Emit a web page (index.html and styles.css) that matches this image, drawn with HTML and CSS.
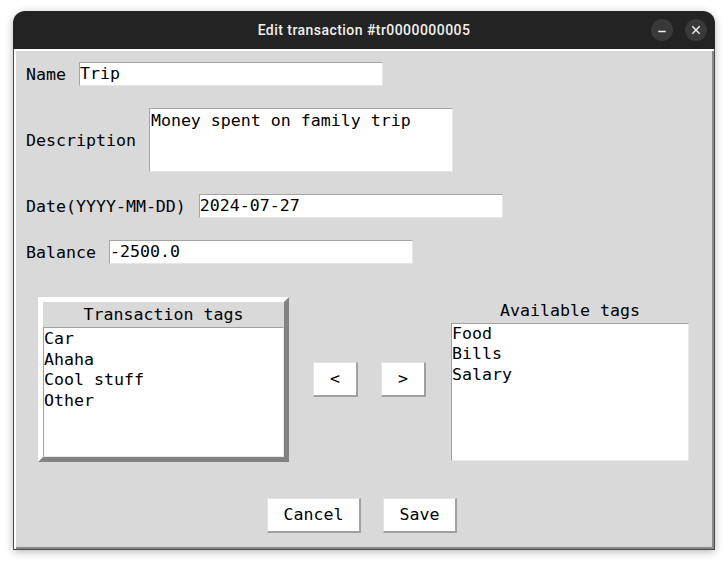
FILE: index.html
```html
<!DOCTYPE html>
<html lang="en">
<head>
<meta charset="utf-8">
<title>Edit transaction</title>
<link rel="stylesheet" href="styles.css">
</head>
<body>
<div class="window">
  <div class="titlebar">
    <span class="title">Edit transaction #tr0000000005</span>
    <div class="wctls">
      <span class="wctl"><svg width="22" height="22" viewBox="0 0 22 22"><path d="M7.3 12.5h7.4" stroke="#f2f2f2" stroke-width="1.5" fill="none"/></svg></span>
      <span class="wctl"><svg width="22" height="22" viewBox="0 0 22 22"><path d="M7.3 7.3l7.4 7.4M14.7 7.3l-7.4 7.4" stroke="#f2f2f2" stroke-width="1.4" fill="none"/></svg></span>
    </div>
  </div>
  <div class="content">
    <div class="row"><span class="lbl">Name</span><div class="entry">Trip</div></div>
    <div class="row"><span class="lbl">Description</span><div class="textbox">Money spent on family trip</div></div>
    <div class="row"><span class="lbl">Date(YYYY-MM-DD)</span><div class="entry">2024-07-27</div></div>
    <div class="row"><span class="lbl">Balance</span><div class="entry">-2500.0</div></div>

    <div class="tags">
      <div class="tagframe">
        <div class="tagframe-title">Transaction tags</div>
        <ul class="listbox listbox-tx">
          <li>Car</li>
          <li>Ahaha</li>
          <li>Cool stuff</li>
          <li>Other</li>
        </ul>
      </div>
      <button class="btn btn-move btn-left">&lt;</button>
      <button class="btn btn-move btn-right">&gt;</button>
      <div class="avail">
        <div class="avail-title">Available tags</div>
        <ul class="listbox listbox-av">
          <li>Food</li>
          <li>Bills</li>
          <li>Salary</li>
        </ul>
      </div>
    </div>

    <div class="actions">
      <button class="btn btn-cancel">Cancel</button>
      <button class="btn btn-save">Save</button>
    </div>
  </div>
</div>
</body>
</html>
```
FILE: styles.css
```css
html, body {
  margin: 0;
  padding: 0;
  background: #ffffff;
}
body {
  width: 728px;
  height: 566px;
  overflow: hidden;
  font-family: "DejaVu Sans Mono", "Liberation Mono", monospace;
  font-size: 16.6px;
  color: #000;
}
.window {
  width: 702px;
  margin: 11px 0 0 13px;
  border-radius: 12px 12px 0 0;
  box-shadow: 0 2px 9px rgba(0, 0, 0, 0.28);
}
.titlebar {
  height: 38px;
  background: #232323;
  border-radius: 12px 12px 0 0;
  display: grid;
  grid-template-columns: 1fr auto 1fr;
  align-items: center;
}
.title {
  grid-column: 2;
  font-family: Roboto, "Noto Sans", sans-serif;
  font-weight: 500;
  font-size: 14px;
  letter-spacing: 0.45px;
  color: #f0f0f0;
  padding-bottom: 1px;
}
.wctls {
  grid-column: 3;
  justify-self: end;
  display: flex;
  gap: 12px;
  padding-right: 8px;
  padding-bottom: 1px;
}
.wctl {
  width: 22px;
  height: 22px;
  border-radius: 50%;
  background: #393939;
  display: block;
}
.wctl svg { display: block; }

.content {
  background: #d9d9d9;
  border: 1px solid #4a4a4a;
  border-top: 0;
  box-shadow: inset 2px 2px 0 #ffffff, inset -2px -2px 0 #888888;
  padding: 13px 0 16px 12px;
}
.row {
  display: flex;
  align-items: center;
  gap: 13px;
  margin-top: 22px;
}
.row:first-child { margin-top: 0; }
.lbl {
  white-space: pre;
}
.entry {
  box-sizing: border-box;
  width: 304px;
  height: 24px;
  background: #fff;
  border: 1px solid;
  border-color: #a4a4a4 #e6e6e6 #e6e6e6 #a4a4a4;
  line-height: 22px;
  padding: 0;
  white-space: pre;
}
.textbox {
  box-sizing: border-box;
  width: 304px;
  height: 64px;
  background: #fff;
  border: 1px solid;
  border-color: #a4a4a4 #e6e6e6 #e6e6e6 #a4a4a4;
  padding: 2px 1px;
  line-height: 19.3px;
}

.tags {
  display: flex;
  align-items: center;
  margin: 33px 0 0 12px;
}
.tagframe {
  box-sizing: border-box;
  width: 251px;
  height: 165px;
  border: 5px solid;
  border-color: #ffffff #828282 #828282 #ffffff;
  background: #d9d9d9;
  display: flex;
  flex-direction: column;
}
.tagframe-title {
  height: 25px;
  line-height: 25px;
  text-align: center;
  flex: none;
}
.listbox {
  list-style: none;
  margin: 0;
  background: #fff;
  border: 1px solid;
  border-color: #a0a0a0 #e8e8e8 #e8e8e8 #a0a0a0;
  line-height: 20.7px;
  box-sizing: border-box;
}
.listbox-tx {
  flex: 1;
  padding: 1px 0 0 0;
}
.btn {
  font-family: inherit;
  font-size: inherit;
  color: #000;
  background: #ffffff;
  box-sizing: border-box;
  height: 35px;
  border-style: solid;
  border-width: 1px 2px 2px 1px;
  border-color: #e2e2e2 #a0a0a0 #a0a0a0 #e2e2e2;
  padding: 0;
  line-height: 30px;
  display: flex;
  align-items: center;
  justify-content: center;
}
.btn-move { width: 45px; }
.btn-left { margin-left: 24px; }
.btn-right { margin-left: 23px; }
.avail {
  width: 238px;
  margin-left: 25px;
  display: flex;
  flex-direction: column;
}
.avail-title {
  height: 24px;
  line-height: 24px;
  text-align: center;
}
.listbox-av {
  height: 138px;
  padding: 0;
}

.actions {
  display: flex;
  justify-content: center;
  gap: 22px;
  margin-top: 36px;
  padding-right: 16px;
}
.btn-cancel { width: 94px; }
.btn-save { width: 74px; }
```
